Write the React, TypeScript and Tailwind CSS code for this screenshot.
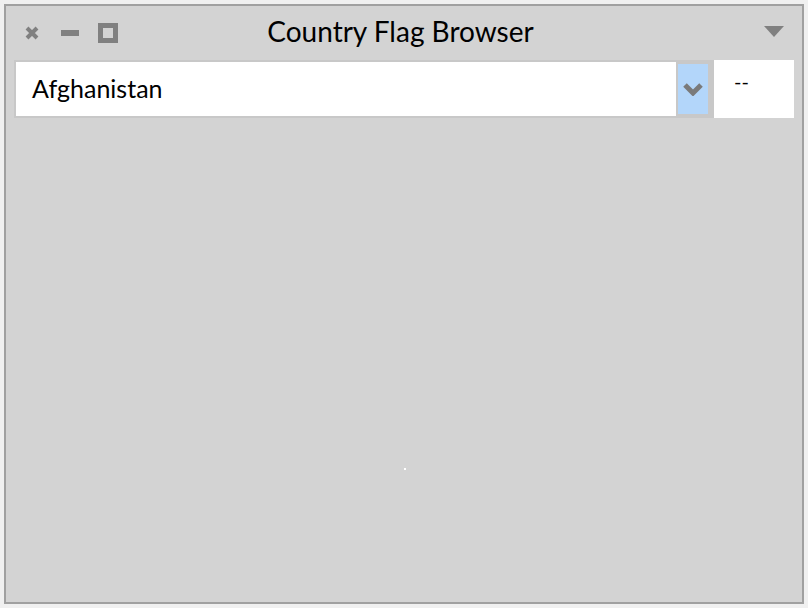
export default function App() {
  return (
    <div className="w-[808px] h-[608px] bg-[#f0f0f0] p-1" style={{ fontFamily: '"Lato", "Noto Sans", sans-serif' }}>
      <div className="w-[800px] h-[600px] border-2 border-[#a0a0a0] bg-[#d3d3d3] flex flex-col">
        <div className="relative h-[54px] flex items-center shrink-0">
          <div className="flex items-center">
            <svg className="ml-[19px]" width="14" height="14" viewBox="0 0 14 14">
              <path d="M2 2 L12 12 M12 2 L2 12" stroke="#808080" strokeWidth="4" strokeLinecap="butt" />
            </svg>
            <div className="ml-[22px] w-[18px] h-[6px] bg-[#808080]" />
            <div className="ml-[19px] w-[20px] h-[20px] border-[5px] border-[#808080]" />
          </div>
          <div className="absolute inset-0 flex items-center justify-center text-[28px] text-black leading-none pb-[4px] pr-[7px]">
            Country Flag Browser
          </div>
          <svg className="absolute left-[758px] top-[20px]" width="20" height="11" viewBox="0 0 20 11">
            <path d="M0 0 L20 0 L10 11 Z" fill="#808080" />
          </svg>
        </div>
        <div className="flex h-[58px] pl-[8px] pr-[8px]">
          <div className="flex-1 flex bg-[#c8c8c8] p-[2px]">
            <div className="w-[660px] bg-white flex items-center pl-[16px] text-[25px] text-black">Afghanistan</div>
            <div className="flex-1 py-[2px] pl-[2px] pr-[4px]">
              <div className="h-full bg-[#b3d6fa] flex items-center justify-center">
                <svg width="20" height="13" viewBox="0 0 20 13">
                  <path d="M2 2 L10 10 L18 2" stroke="#7a7a7a" strokeWidth="5" fill="none" strokeLinejoin="miter" />
                </svg>
              </div>
            </div>
          </div>
          <div className="w-[80px] bg-white text-[20px] text-black pl-[20px] pt-[11px] leading-none">--</div>
        </div>
        <div className="flex-1 relative">
          <div className="absolute left-[398px] top-[350px] w-[2px] h-[2px] bg-white" />
        </div>
      </div>
    </div>
  );
}
